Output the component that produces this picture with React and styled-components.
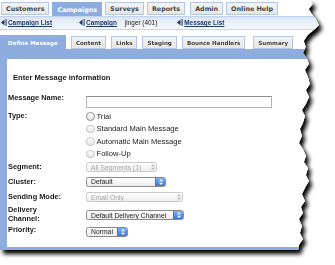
import React from "react";
import styled, { createGlobalStyle } from "styled-components";

const GlobalStyle = createGlobalStyle`
  body {
    margin: 0;
    background: #fff;
    font-family: "Liberation Sans", Arial, sans-serif;
  }
`;

const blue = "#8eaddf";

// torn right edge of the screenshot
const edge = [
  [310, 0], [313, 4], [309, 9], [312, 14], [316, 19], [319, 25], [314, 30],
  [308, 35], [304, 41], [306, 47], [303, 53], [307, 58], [309, 64], [305, 70],
  [308, 77], [310, 84], [306, 90], [309, 97], [306, 104], [302, 110],
  [305, 116], [303, 123], [300, 129], [302, 136], [299, 143], [303, 149],
  [306, 156], [304, 162], [308, 168], [306, 175], [309, 181], [305, 188],
  [302, 194], [305, 201], [301, 207], [303, 213], [299, 219], [302, 226],
  [300, 233], [303, 239], [299, 245], [298, 252],
];
const clip = `polygon(0 0, ${edge.map(([x, y]) => `${x}px ${y}px`).join(", ")}, 0 252px)`;

const Frame = styled.div`
  width: 335px;
  height: 265px;
  filter: drop-shadow(3px 4px 2px rgba(0, 0, 0, 1));
`;

const Sheet = styled.div`
  width: 322px;
  height: 250px;
  background: #fff;
  clip-path: ${clip};
  display: flex;
  flex-direction: column;
`;

const TopTabs = styled.div`
  display: flex;
  align-items: flex-start;
  gap: 3px;
  height: 14px;
  padding: 2px 0 0 1px;
`;

const Tab = styled.div`
  box-sizing: border-box;
  height: ${(p) => (p.$active ? 14 : 13)}px;
  padding: 0 ${(p) => p.$pad || 4}px;
  margin-left: ${(p) => p.$ml || 0}px;
  display: flex;
  align-items: center;
  font-family: "DejaVu Sans", Verdana, sans-serif;
  font-weight: bold;
  font-size: ${(p) => p.$fs || 6.4}px;
  color: ${(p) => (p.$active ? "#fff" : "#444")};
  background: ${(p) => (p.$active ? blue : "linear-gradient(#f4f4f4, #e6e6e6)")};
  border: 1px solid ${(p) => (p.$active ? blue : "#b3c7e4")};
  border-bottom: ${(p) => (p.$active ? "none" : undefined)};
  white-space: nowrap;
`;

const NavBar = styled.div`
  box-sizing: border-box;
  height: 14px;
  display: flex;
  align-items: center;
  padding-left: 1px;
  background: linear-gradient(#b9cdeb 0, #dfe8f6 2px, #f6f9fd 100%);
  border-bottom: 1px solid #c6d6ed;
`;

const NavLink = styled.a`
  display: flex;
  align-items: center;
  margin-left: ${(p) => p.$ml || 0}px;
  font-weight: bold;
  font-size: 6.4px;
  color: #1d3a6b;
  text-decoration: underline;
  white-space: nowrap;
  svg {
    margin-right: 1px;
  }
`;

const User = styled.span`
  margin-left: 8px;
  font-size: 6.4px;
  color: #222;
  white-space: nowrap;
`;

const SubTabs = styled.div`
  display: flex;
  align-items: flex-end;
  height: 19px;
  gap: 5px;
`;

const Band = styled.div`
  height: 10px;
  background: ${blue};
`;

const Panel = styled.div`
  flex: 1;
  background: #fff;
  border-left: 7px solid ${blue};
  border-bottom: 3px solid ${blue};
`;

const Heading = styled.div`
  padding: 14px 0 0 6px;
  height: 10px;
  line-height: 10px;
  font-weight: bold;
  font-size: 7.6px;
  color: #1a1a1a;
`;

const Form = styled.div`
  margin-top: 10px;
  padding-left: 1px;
`;

const Field = styled.div`
  display: grid;
  grid-template-columns: 78px auto;
  align-items: ${(p) => p.$align || "center"};
  height: ${(p) => p.$h}px;
`;

const Label = styled.div`
  font-weight: bold;
  font-size: 7.4px;
  line-height: ${(p) => p.$lh || 10}px;
  color: #1a1a1a;
  margin-top: ${(p) => p.$mt || 0}px;
`;

const TextInput = styled.div`
  box-sizing: border-box;
  width: 186px;
  height: 12px;
  margin-top: ${(p) => p.$mt || 0}px;
  border: 1px solid #b4b4b4;
  border-top-color: #8e8e8e;
  background: #fff;
`;

const Options = styled.div`
  display: flex;
  flex-direction: column;
`;

const Option = styled.div`
  display: flex;
  align-items: center;
  height: 12.5px;
  font-size: 7.6px;
  color: #222;
`;

const Radio = styled.span`
  box-sizing: border-box;
  width: 8.5px;
  height: 8.5px;
  margin-right: 2px;
  border-radius: 50%;
  border: 1px solid ${(p) => (p.$dim ? "#c4c4c4" : "#8d8d8d")};
  background: linear-gradient(#ffffff, #e4e4e4);
`;

const Select = styled.div`
  box-sizing: border-box;
  width: ${(p) => p.$w}px;
  height: 10px;
  margin-top: ${(p) => p.$mt || 0}px;
  display: flex;
  align-items: center;
  border: 1px solid ${(p) => (p.$disabled ? "#c9c9c9" : "#8a8a8a")};
  border-radius: 2.5px;
  background: linear-gradient(#ffffff, #ececec);
  font-size: 6.8px;
  color: ${(p) => (p.$disabled ? "#a9a9a9" : "#1a1a1a")};
  overflow: hidden;
`;

const SelectText = styled.span`
  flex: 1;
  padding-left: 4px;
  white-space: nowrap;
  overflow: hidden;
`;

const ArrowBox = styled.span`
  width: ${(p) => (p.$disabled ? 7 : 9)}px;
  align-self: stretch;
  display: flex;
  align-items: center;
  justify-content: center;
  background: ${(p) =>
    p.$disabled ? "transparent" : "linear-gradient(#7fb0f0, #3f78d6)"};
  border-left: ${(p) => (p.$disabled ? "none" : "1px solid #4f73a8")};
`;

function Arrows({ disabled }) {
  const c = disabled ? "#b8b8b8" : "#fff";
  return (
    <svg width="4" height="6" viewBox="0 0 4 6">
      <path d="M2 0 L4 2.2 L0 2.2 Z" fill={c} />
      <path d="M2 6 L4 3.8 L0 3.8 Z" fill={c} />
    </svg>
  );
}

function Back() {
  return (
    <svg width="6" height="7" viewBox="0 0 6 7">
      <path d="M0 3.5 L3.5 0.5 L3.5 6.5 Z" fill="#1d3a6b" />
      <rect x="4.6" y="0" width="1" height="7" fill="#1d3a6b" />
    </svg>
  );
}

function Dropdown({ w, text, disabled, mt }) {
  return (
    <Select $w={w} $disabled={disabled} $mt={mt}>
      <SelectText>{text}</SelectText>
      <ArrowBox $disabled={disabled}>
        <Arrows disabled={disabled} />
      </ArrowBox>
    </Select>
  );
}

export default function App() {
  return (
    <Frame>
      <GlobalStyle />
      <Sheet>
        <TopTabs>
          <Tab>Customers</Tab>
          <Tab $active>Campaigns</Tab>
          <Tab>Surveys</Tab>
          <Tab>Reports</Tab>
          <Tab $ml={2}>Admin</Tab>
          <Tab>Online Help</Tab>
        </TopTabs>
        <NavBar>
          <NavLink>
            <Back />
            Campaign List
          </NavLink>
          <NavLink $ml={27}>
            <Back />
            Campaign
          </NavLink>
          <User>jinger (401)</User>
          <NavLink $ml={20}>
            <Back />
            Message List
          </NavLink>
        </NavBar>
        <SubTabs>
          <Tab $active $pad={7} $fs={5.6}>Define Message</Tab>
          <Tab $fs={5.6}>Content</Tab>
          <Tab $fs={5.6}>Links</Tab>
          <Tab $fs={5.6}>Staging</Tab>
          <Tab $fs={5.6}>Bounce Handlers</Tab>
          <Tab $fs={5.6} $ml={3}>Summary</Tab>
        </SubTabs>
        <Band />
        <Panel>
          <Heading>Enter Message information</Heading>
          <Form>
            <Field $h={17} $align="start">
              <Label>Message Name:</Label>
              <TextInput $mt={2.5} />
            </Field>
            <Field $h={50} $align="start">
              <Label $mt={1}>Type:</Label>
              <Options>
                <Option>
                  <Radio />
                  Trial
                </Option>
                <Option>
                  <Radio $dim />
                  Standard Main Message
                </Option>
                <Option>
                  <Radio $dim />
                  Automatic Main Message
                </Option>
                <Option>
                  <Radio $dim />
                  Follow-Up
                </Option>
              </Options>
            </Field>
            <Field $h={14}>
              <Label>Segment:</Label>
              <Dropdown w={71} text="All Segments (1)" disabled />
            </Field>
            <Field $h={15}>
              <Label>Cluster:</Label>
              <Dropdown w={80} text="Default" />
            </Field>
            <Field $h={16}>
              <Label>Sending Mode:</Label>
              <Dropdown w={97} text="Email Only" disabled />
            </Field>
            <Field $h={20}>
              <Label $lh={8.6}>
                Delivery
                <br />
                Channel:
              </Label>
              <Dropdown w={98} text="Default Delivery Channel" />
            </Field>
            <Field $h={21} $align="start">
              <Label $lh={9}>Priority:</Label>
              <Dropdown w={42} text="Normal" mt={1.7} />
            </Field>
          </Form>
        </Panel>
      </Sheet>
    </Frame>
  );
}
